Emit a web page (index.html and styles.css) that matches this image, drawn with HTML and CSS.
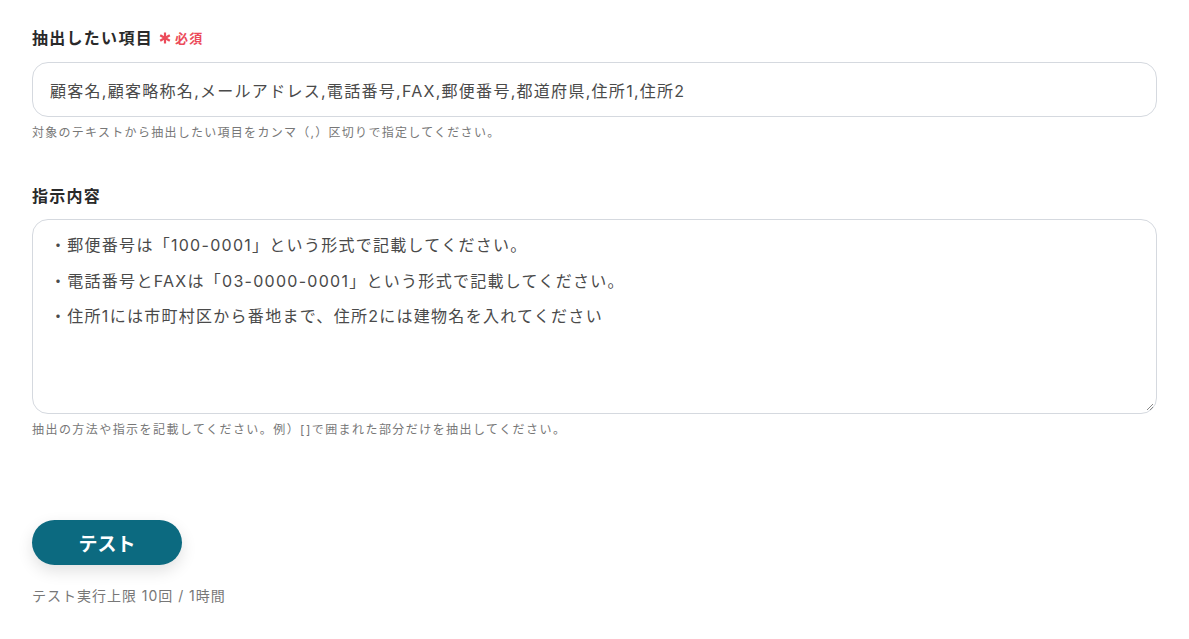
FILE: index.html
```html
<!DOCTYPE html>
<html lang="ja">
<head>
<meta charset="utf-8">
<link rel="stylesheet" href="styles.css">
</head>
<body>
<div class="page">
  <div class="field">
    <div class="label">抽出したい項目<span class="req"><svg class="ast" width="12" height="12" viewBox="0 0 12 12"><g stroke="#ec4b5a" stroke-width="2.2" stroke-linecap="butt"><path d="M6 0.5V11.5"/><path d="M1.2 3.25L10.8 8.75"/><path d="M1.2 8.75L10.8 3.25"/></g></svg>必須</span></div>
    <div class="input">顧客名,顧客略称名,メールアドレス,電話番号,FAX,郵便番号,都道府県,住所1,住所2</div>
    <div class="help">対象のテキストから抽出したい項目をカンマ（,）区切りで指定してください。</div>
  </div>
  <div class="field field2">
    <div class="label">指示内容</div>
    <div class="textarea">
      <p>・郵便番号は「100-0001」という形式で記載してください。</p>
      <p>・電話番号とFAXは「03-0000-0001」という形式で記載してください。</p>
      <p>・住所1には市町村区から番地まで、住所2には建物名を入れてください</p>
      <svg class="grip" width="8" height="8" viewBox="0 0 8 8"><path d="M7 1L1 7M7 4L4 7" stroke="#888" stroke-width="1"/></svg>
    </div>
    <div class="help help2">抽出の方法や指示を記載してください。例）[]で囲まれた部分だけを抽出してください。</div>
  </div>
  <button class="btn">テスト</button>
  <div class="limit">テスト実行上限 10回 / 1時間</div>
</div>
</body>
</html>
```
FILE: styles.css
```css
* { box-sizing: border-box; }
body {
  margin: 0;
  background: #fff;
  font-family: Inter, "Noto Sans CJK JP", sans-serif;
  color: #333;
  letter-spacing: 0.08em;
}
.page {
  padding: 27px 32px 0 32px;
}
.label {
  font-size: 16px;
  font-weight: 700;
  color: #2a2a2a;
  line-height: 22px;
  display: flex;
  align-items: center;
}
.req {
  color: #ec4b5a;
  font-size: 13px;
  font-weight: 700;
  margin-left: 6px;
  display: inline-flex;
  align-items: center;
}
.ast { margin-right: 4px; }
.input {
  margin-top: 13px;
  height: 55px;
  border: 1px solid #d5d9df;
  border-radius: 16px;
  padding: 0 17px;
  display: flex;
  align-items: center;
  font-size: 16px;
  color: #4a4a4a;
}
.help {
  margin-top: 7px;
  font-size: 12px;
  color: #777;
  line-height: 18px;
}
.help2 { letter-spacing: 0.12em; }
.field2 { margin-top: 43px; }
.textarea {
  position: relative;
  margin-top: 12px;
  height: 195px;
  border: 1px solid #d5d9df;
  border-radius: 16px;
  padding: 8px 17px;
  font-size: 16px;
  color: #4a4a4a;
}
.textarea p {
  margin: 0;
  line-height: 35.5px;
}
.grip {
  position: absolute;
  right: 2px;
  bottom: 2px;
}
.btn {
  margin-top: 81px;
  display: block;
  width: 150px;
  height: 45px;
  border: none;
  border-radius: 23px;
  background: #0c6a80;
  color: #fff;
  font-family: Inter, "Noto Sans CJK JP", sans-serif;
  font-size: 19px;
  font-weight: 700;
  letter-spacing: 0;
  box-shadow: 0 6px 16px rgba(0,0,0,0.12);
}
.limit {
  margin-top: 20px;
  font-size: 14px;
  color: #777;
  letter-spacing: 0.07em;
}
```
